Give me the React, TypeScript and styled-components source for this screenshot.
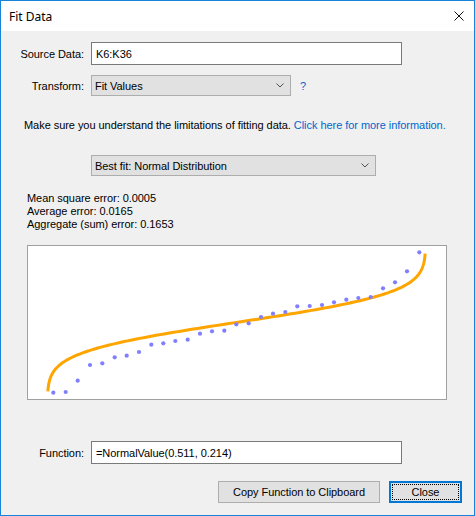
import React from "react";
import styled, { createGlobalStyle } from "styled-components";

const GlobalStyle = createGlobalStyle`
  html, body { margin: 0; padding: 0; }
  body {
    width: 475px;
    height: 516px;
    overflow: hidden;
    background: #f0f0f0;
    font-family: "Liberation Sans", Arial, sans-serif;
    font-size: 11px;
    letter-spacing: -0.05px;
    color: #000;
  }
`;

const Window = styled.div`
  width: 475px;
  height: 516px;
  box-sizing: border-box;
  border: 1px solid #1883d7;
  background: #f0f0f0;
  display: flex;
  flex-direction: column;
`;

const TitleBar = styled.div`
  height: 30px;
  background: #ffffff;
  display: flex;
  align-items: center;
  justify-content: space-between;
  padding-left: 8px;
  font-family: "Noto Sans", "Open Sans", sans-serif;
  font-size: 12px;
  letter-spacing: 0;
  color: #000;
`;

const CloseGlyph = styled.div`
  width: 30px;
  height: 30px;
  display: flex;
  align-items: center;
  justify-content: center;
`;

const Content = styled.div`
  display: flex;
  flex-direction: column;
`;

const FormRow = styled.div<{ $top: number }>`
  display: grid;
  grid-template-columns: 83px auto auto;
  justify-content: start;
  column-gap: 7px;
  align-items: center;
  margin-top: ${(p) => p.$top}px;
`;

const Label = styled.div`
  text-align: right;
  white-space: nowrap;
`;

const TextBox = styled.div`
  width: 311px;
  height: 23px;
  box-sizing: border-box;
  border: 1px solid #7a7a7a;
  background: #ffffff;
  display: flex;
  align-items: center;
  padding-left: 4px;
`;

const Select = styled.div<{ $w: number; $left?: number; $top?: number }>`
  width: ${(p) => p.$w}px;
  height: 21px;
  box-sizing: border-box;
  border: 1px solid #adadad;
  background: #e1e1e1;
  display: flex;
  align-items: center;
  justify-content: space-between;
  padding: 0 6px 0 3px;
  margin-left: ${(p) => p.$left ?? 0}px;
  margin-top: ${(p) => p.$top ?? 0}px;
`;

const Help = styled.span`
  color: #0066cc;
  margin-left: 2px;
`;

const InfoText = styled.div`
  margin-top: 22px;
  padding-left: 23px;
  line-height: 14px;
  white-space: nowrap;
`;

const Link = styled.span`
  color: #0066cc;
`;

const Stats = styled.div`
  margin-top: 16px;
  padding-left: 26px;
  line-height: 13px;
`;

const ChartBox = styled.div`
  margin-top: 14px;
  margin-left: 26px;
  width: 420px;
  height: 155px;
  box-sizing: border-box;
  border: 1px solid #a0a0a0;
  background: #ffffff;
  svg { display: block; }
`;

const ButtonRow = styled.div`
  margin-top: 17px;
  display: flex;
  justify-content: flex-end;
  gap: 9px;
  padding-right: 12px;
`;

const Button = styled.div<{ $w: number; $default?: boolean }>`
  width: ${(p) => p.$w}px;
  height: 22px;
  box-sizing: border-box;
  border: ${(p) => (p.$default ? "2px solid #0078d7" : "1px solid #adadad")};
  background: #e1e1e1;
  display: flex;
  align-items: center;
  justify-content: center;
  padding: ${(p) => (p.$default ? "1px" : "0")};
`;

const FocusRect = styled.div`
  flex: 1;
  align-self: stretch;
  border: 1px dotted #000;
  display: flex;
  align-items: center;
  justify-content: center;
`;

const Chevron = () => (
  <svg width="8" height="5" viewBox="0 0 8 5">
    <path d="M0.5 0.5 L4 4 L7.5 0.5" fill="none" stroke="#505050" strokeWidth="1" />
  </svg>
);

// data points in page coordinates
const pts: [number, number][] = [
  [53.3, 393.7], [65.7, 393], [77.7, 381.7], [90, 366], [102.3, 364.3],
  [114.7, 358.3], [126.7, 356.7], [139, 353], [151.3, 345.7], [163.3, 344.3],
  [175.3, 342], [187.7, 340.7], [200, 334.7], [212, 332.3], [224.3, 331.7],
  [236.3, 325.3], [248.7, 324.3], [261, 318], [273, 314.7], [285.3, 313],
  [297.3, 307.3], [309.7, 307], [322, 306], [334, 303.3], [346.3, 300.7],
  [358.3, 299], [370.7, 298], [383, 289.3], [395, 283.3], [407, 272.3],
  [419.3, 253.3],
];

function erf(x: number) {
  const s = x < 0 ? -1 : 1;
  const a = Math.abs(x);
  const t = 1 / (1 + 0.3275911 * a);
  const y =
    1 -
    ((((1.061405429 * t - 1.453152027) * t + 1.421413741) * t - 0.284496736) * t +
      0.254829592) *
      t *
      Math.exp(-a * a);
  return s * y;
}

function curvePath() {
  const ox = 28;
  const oy = 247;
  const parts: string[] = [];
  for (let z = -2.99; z <= 2.9901; z += 0.03) {
    const p = 0.5 * (1 + erf(z / Math.SQRT2));
    const x = 47.3 + p * 378.4 - ox;
    const y = 323.4 - 23.1 * z - oy;
    parts.push(`${parts.length ? "L" : "M"}${x.toFixed(2)} ${y.toFixed(2)}`);
  }
  return parts.join(" ");
}

const Chart = () => (
  <svg width="418" height="153" viewBox="0 0 418 153">
    <path d={curvePath()} fill="none" stroke="#ffa500" strokeWidth="3" />
    {pts.map(([x, y], i) => (
      <circle key={i} cx={x - 28} cy={y - 247} r="2.1" fill="#7f7fff" />
    ))}
  </svg>
);

export default function App() {
  return (
    <>
      <GlobalStyle />
      <Window>
        <TitleBar>
          <span>Fit Data</span>
          <CloseGlyph>
            <svg width="10" height="10" viewBox="0 0 10 10">
              <path d="M0.5 0.5 L9.5 9.5 M9.5 0.5 L0.5 9.5" stroke="#111" strokeWidth="1" />
            </svg>
          </CloseGlyph>
        </TitleBar>
        <Content>
          <FormRow $top={11}>
            <Label>Source Data:</Label>
            <TextBox>K6:K36</TextBox>
          </FormRow>
          <FormRow $top={10}>
            <Label>Transform:</Label>
            <Select $w={200}>
              <span>Fit Values</span>
              <Chevron />
            </Select>
            <Help>?</Help>
          </FormRow>
          <InfoText>
            Make sure you understand the limitations of fitting data.{" "}
            <Link>Click here for more information.</Link>
          </InfoText>
          <Select $w={285} $left={90} $top={23}>
            <span>Best fit: Normal Distribution</span>
            <Chevron />
          </Select>
          <Stats>
            <div>Mean square error: 0.0005</div>
            <div>Average error: 0.0165</div>
            <div>Aggregate (sum) error: 0.1653</div>
          </Stats>
          <ChartBox>
            <Chart />
          </ChartBox>
          <FormRow $top={41}>
            <Label>Function:</Label>
            <TextBox>=NormalValue(0.511, 0.214)</TextBox>
          </FormRow>
          <ButtonRow>
            <Button $w={162}>Copy Function to Clipboard</Button>
            <Button $w={73} $default>
              <FocusRect>Close</FocusRect>
            </Button>
          </ButtonRow>
        </Content>
      </Window>
    </>
  );
}
